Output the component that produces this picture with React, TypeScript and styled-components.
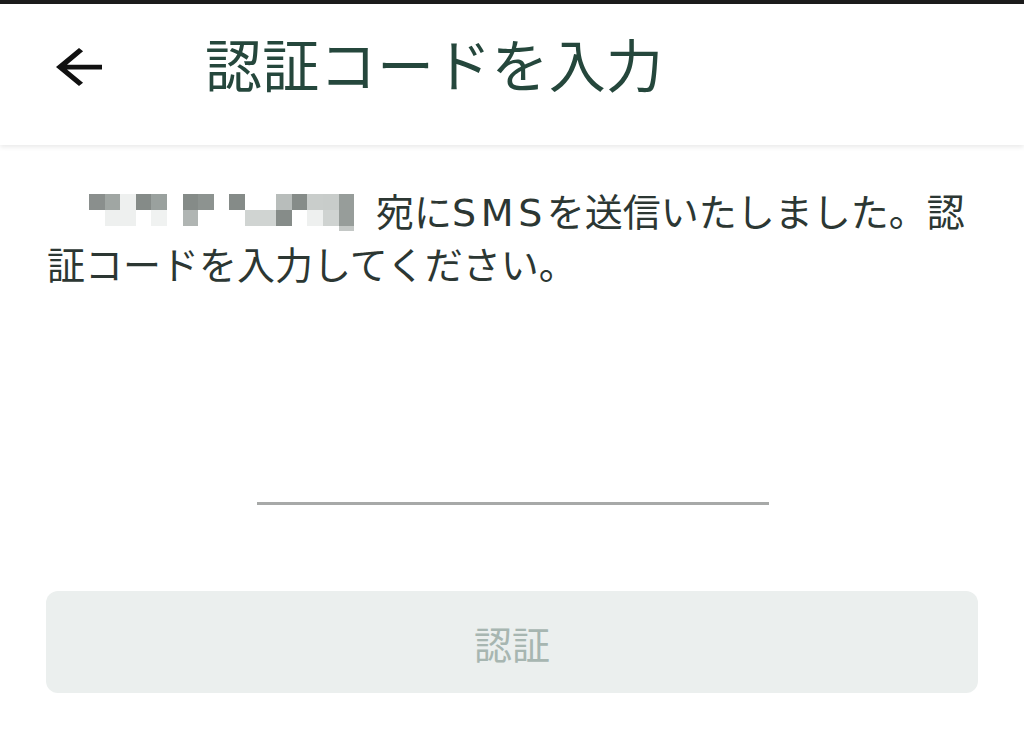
import React from 'react';
import styled, { createGlobalStyle } from 'styled-components';

const GlobalStyle = createGlobalStyle`
  html, body {
    margin: 0;
    padding: 0;
    background: #ffffff;
  }
  body {
    font-family: "Noto Sans CJK JP", "Noto Sans", sans-serif;
  }
`;

const Page = styled.div`
  width: 1024px;
  min-height: 754px;
  background: #ffffff;
`;

const StatusStrip = styled.div`
  height: 4px;
  background: #1c1c1c;
`;

const Header = styled.header`
  position: relative;
  z-index: 1;
  height: 141px;
  box-sizing: border-box;
  padding: 0 0 16px 56px;
  display: flex;
  align-items: center;
  background: #ffffff;
  box-shadow: 0 2px 5px rgba(0, 0, 0, 0.09);
`;

const BackButton = styled.button`
  width: 46px;
  height: 38px;
  padding: 0;
  border: none;
  background: none;
  display: flex;
  color: #111111;
`;

const Title = styled.h1`
  margin: 0 0 8px 103px;
  font-size: 57px;
  font-weight: 400;
  line-height: 1;
  letter-spacing: 0.3px;
  color: #25473c;
`;

const Content = styled.main`
  padding: 40px 46px 0 47px;
`;

const Message = styled.p`
  margin: 0;
  font-size: 38px;
  line-height: 50px;
  color: #2c3733;
`;

const Latin = styled.span`
  font-family: "DejaVu Sans", "Noto Sans", sans-serif;
  letter-spacing: 0.12em;
`;

const Mosaic = styled.span`
  display: inline-grid;
  grid-template-columns: repeat(17, 15.6px);
  grid-template-rows: 16px 16px 5px;
  margin: 9px 22px 0 42px;
  vertical-align: top;
`;

const Cell = styled.span<{ $c: string }>`
  background: ${p => p.$c};
`;

const CodeField = styled.div`
  width: 512px;
  margin: 150px auto 0;
`;

const CodeInput = styled.input`
  display: block;
  width: 100%;
  height: 64px;
  box-sizing: content-box;
  padding: 0;
  border: none;
  border-bottom: 3px solid #a7a9a8;
  outline: none;
  background: transparent;
  font-family: inherit;
  font-size: 38px;
  text-align: center;
  color: #2c3733;
`;

const SubmitButton = styled.button`
  display: block;
  width: 932px;
  height: 102px;
  margin: 86px 0 0 -1px;
  border: none;
  border-radius: 12px;
  background: #ebefee;
  font-family: inherit;
  font-size: 38px;
  color: #a7b6b1;
`;

const W = '#ffffff';
const mosaicRows: string[][] = [
  ['#8a8f8d', '#a0a6a3', '#eef0ef', '#858b88', '#9aa19e', W, '#858b88', '#8d9390', W, '#858b88', W, W, '#b8bdbb', '#868c89', '#c9cdcb', '#c8ccca', '#979d9a'],
  [W, '#eef0ef', '#eef0ef', W, '#f0f2f1', W, '#b0b5b3', W, W, W, '#d0d4d2', '#d0d4d2', '#868c89', W, '#eef0ef', '#cfd3d1', '#979d9a'],
  [W, W, W, W, W, W, W, W, W, W, W, W, W, W, W, W, '#c4c8c6'],
];

const App: React.FC = () => {
  return (
    <Page>
      <GlobalStyle />
      <StatusStrip />
      <Header>
        <BackButton aria-label="戻る">
          <svg width="46" height="38" viewBox="4 4 16 16" preserveAspectRatio="none">
            <path
              d="M20 11H7.83l5.59-5.59L12 4l-8 8 8 8 1.41-1.41L7.83 13H20v-2z"
              fill="currentColor"
            />
          </svg>
        </BackButton>
        <Title>認証コードを入力</Title>
      </Header>

      <Content>
        <Message>
          <Mosaic aria-hidden>
            {mosaicRows.flat().map((c, i) => (
              <Cell key={i} $c={c} />
            ))}
          </Mosaic>
          宛に<Latin>SMS</Latin>を送信いたしました。認証コードを入力してください。
        </Message>

        <CodeField>
          <CodeInput type="tel" inputMode="numeric" />
        </CodeField>

        <SubmitButton disabled>認証</SubmitButton>
      </Content>
    </Page>
  );
};

export default App;
